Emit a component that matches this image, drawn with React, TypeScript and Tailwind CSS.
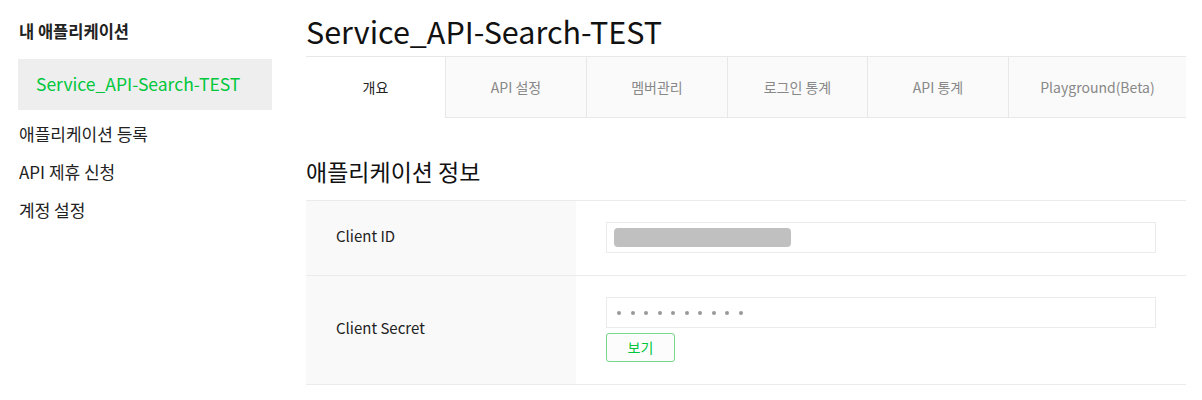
import React from "react"

const tabs = [
  { label: "개요", w: "w-[140px]", active: true },
  { label: "API 설정", w: "w-[141px]" },
  { label: "멤버관리", w: "w-[141px]" },
  { label: "로그인 통계", w: "w-[140px]" },
  { label: "API 통계", w: "w-[141px]" },
  { label: "Playground(Beta)", w: "flex-1" },
]

function Sidebar() {
  return (
    <aside className="w-[272px] shrink-0 pl-[18px]">
      <div className="mt-[20px] pl-px text-[16.5px] font-bold leading-[22px] text-[#222]">내 애플리케이션</div>
      <div className="mt-[17px] flex h-[51px] items-center bg-[#eeeeee] pl-[18px] text-[17.5px] text-[#00c73c]">
        Service_API-Search-TEST
      </div>
      <ul className="mt-[5px] pl-px text-[17px] text-[#222]">
        <li className="leading-[38px]">애플리케이션 등록</li>
        <li className="leading-[38px]">API 제휴 신청</li>
        <li className="leading-[38px]">계정 설정</li>
      </ul>
    </aside>
  )
}

function Tabs() {
  return (
    <div className="flex h-[62px] border-t border-[#e8e8e8]">
      {tabs.map((t) =>
        t.active ? (
          <div key={t.label} className={`${t.w} flex items-center justify-center border-r border-[#e8e8e8] bg-white text-[14px] text-[#222]`}>
            {t.label}
          </div>
        ) : (
          <div
            key={t.label}
            className={`${t.w} flex items-center justify-center border-b border-r border-[#e8e8e8] bg-[#fafafa] text-[14px] text-[#888] last:border-r-0`}
          >
            {t.label}
          </div>
        )
      )}
    </div>
  )
}

function Field({ children }: { children: React.ReactNode }) {
  return <div className="flex h-[31px] items-center border border-[#ebebeb] bg-white">{children}</div>
}

export default function App() {
  return (
    <div className="flex h-[400px] w-[1202px] bg-white font-['Noto_Sans_CJK_KR','Noto_Sans',sans-serif]">
      <Sidebar />
      <main className="ml-[34px] w-[880px]">
        <h1 className="mt-[13px] mb-[7px] text-[30.5px] leading-[36px] text-[#111]">Service_API-Search-TEST</h1>
        <Tabs />
        <h2 className="mt-[37px] mb-[13px] text-[23px] leading-[32px] text-[#111]">애플리케이션 정보</h2>
        <div className="border-t border-[#ebebeb]">
          <div className="flex border-b border-[#ebebeb]">
            <div className="flex w-[270px] items-center bg-[#f9f9f9] pb-[3px] pl-[30px] text-[15px] text-[#222]">Client ID</div>
            <div className="flex-1 px-[30px] pt-[21px] pb-[22px]">
              <Field>
                <div className="ml-[7px] h-[19px] w-[177px] rounded-[4px] bg-[#c0c0c0]" />
              </Field>
            </div>
          </div>
          <div className="flex border-b border-[#ebebeb]">
            <div className="flex w-[270px] items-center bg-[#f9f9f9] pb-[3px] pl-[30px] text-[15px] text-[#222]">Client Secret</div>
            <div className="flex-1 px-[30px] pt-[21px] pb-[22px]">
              <Field>
                <div className="ml-[10px] flex gap-[9.5px]">
                  {Array.from({ length: 10 }).map((_, i) => (
                    <span key={i} className="h-1 w-1 rounded-full bg-[#999]" />
                  ))}
                </div>
              </Field>
              <button className="mt-[5px] flex h-[29px] w-[69px] items-center justify-center rounded-[3px] border border-[#74d98b] bg-[#fcfcfc] text-[14px] text-[#00c73c]">
                보기
              </button>
            </div>
          </div>
        </div>
      </main>
    </div>
  )
}
